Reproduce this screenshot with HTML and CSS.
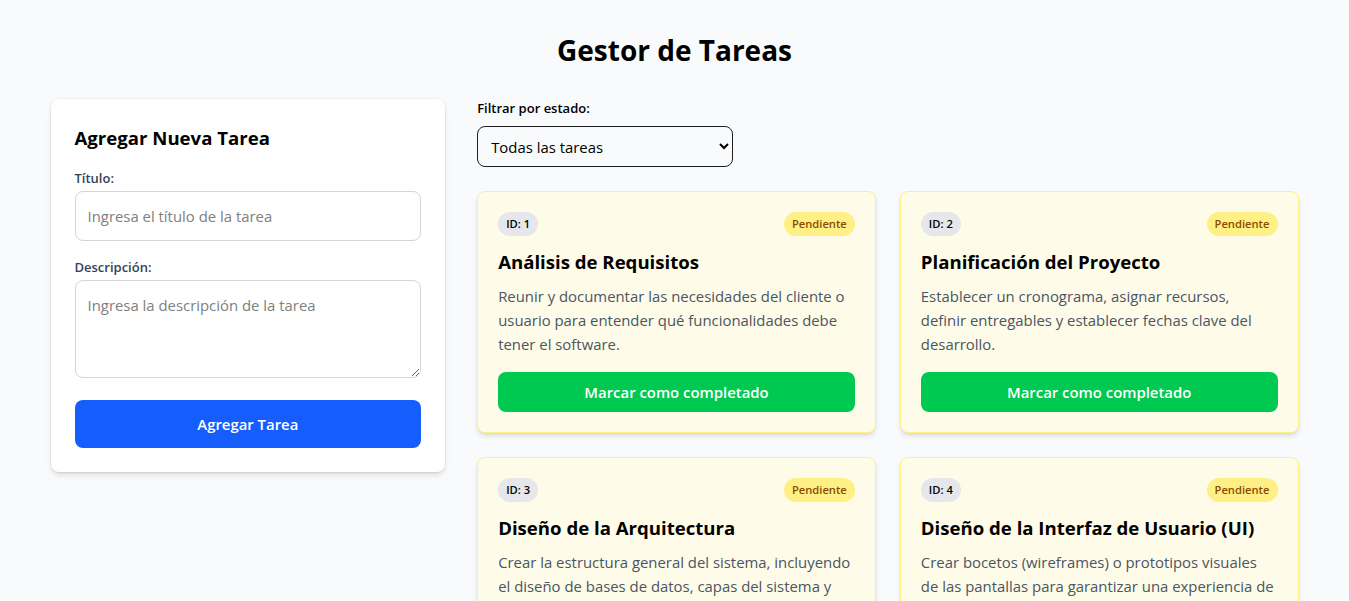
FILE: index.html
```html
<!DOCTYPE html>
<html lang="es">
<head>
<meta charset="utf-8">
<title>Gestor de Tareas</title>
<link rel="stylesheet" href="styles.css">
</head>
<body>
<div class="container">
  <h1 class="page-title">Gestor de Tareas</h1>
  <div class="layout">
    <aside class="form-card">
      <h2 class="form-title">Agregar Nueva Tarea</h2>
      <label class="field-label" for="titulo">Título:</label>
      <input class="field-input" id="titulo" type="text" placeholder="Ingresa el título de la tarea">
      <label class="field-label" for="desc">Descripción:</label>
      <textarea class="field-input field-area" id="desc" rows="3" placeholder="Ingresa la descripción de la tarea"></textarea>
      <button class="btn btn-blue" type="button">Agregar Tarea</button>
    </aside>
    <section class="tasks">
      <label class="filter-label" for="filtro">Filtrar por estado:</label>
      <select class="filter-select" id="filtro">
        <option>Todas las tareas</option>
        <option>Pendientes</option>
        <option>Completadas</option>
      </select>
      <div class="task-grid">
        <article class="task-card">
          <div class="task-top"><span class="badge badge-id">ID: 1</span><span class="badge badge-pend">Pendiente</span></div>
          <h3 class="task-title">Análisis de Requisitos</h3>
          <p class="task-desc">Reunir y documentar las necesidades del cliente o usuario para entender qué funcionalidades debe tener el software.</p>
          <button class="btn btn-green" type="button">Marcar como completado</button>
        </article>
        <article class="task-card">
          <div class="task-top"><span class="badge badge-id">ID: 2</span><span class="badge badge-pend">Pendiente</span></div>
          <h3 class="task-title">Planificación del Proyecto</h3>
          <p class="task-desc">Establecer un cronograma, asignar recursos, definir entregables y establecer fechas clave del desarrollo.</p>
          <button class="btn btn-green" type="button">Marcar como completado</button>
        </article>
        <article class="task-card">
          <div class="task-top"><span class="badge badge-id">ID: 3</span><span class="badge badge-pend">Pendiente</span></div>
          <h3 class="task-title">Diseño de la Arquitectura</h3>
          <p class="task-desc">Crear la estructura general del sistema, incluyendo el diseño de bases de datos, capas del sistema y tecnologías a utilizar.</p>
          <button class="btn btn-green" type="button">Marcar como completado</button>
        </article>
        <article class="task-card">
          <div class="task-top"><span class="badge badge-id">ID: 4</span><span class="badge badge-pend">Pendiente</span></div>
          <h3 class="task-title">Diseño de la Interfaz de Usuario (UI)</h3>
          <p class="task-desc">Crear bocetos (wireframes) o prototipos visuales de las pantallas para garantizar una experiencia de usuario intuitiva.</p>
          <button class="btn btn-green" type="button">Marcar como completado</button>
        </article>
      </div>
    </section>
  </div>
</div>
</body>
</html>
```
FILE: styles.css
```css
* { box-sizing: border-box; }
html, body { margin: 0; padding: 0; }
body {
  background: #f9fafb;
  font-family: "Open Sans", "Noto Sans", sans-serif;
  color: #000;
  font-size: 14.9px;
  line-height: 24px;
}
.container {
  max-width: 1280px;
  margin: 0 auto;
  padding: 32px 16px;
}
.page-title {
  margin: 0 0 31px;
  text-align: center;
  font-size: 28px;
  line-height: 36px;
  font-weight: 700;
}
.layout {
  display: grid;
  grid-template-columns: repeat(3, minmax(0, 1fr));
  gap: 32px;
  align-items: start;
}
.form-card {
  background: #fff;
  border-radius: 8px;
  padding: 25px 24px 24px;
  box-shadow: 0 0 0 1px rgba(0,0,0,0.04), 0 4px 6px -1px rgba(0,0,0,0.1), 0 2px 4px -2px rgba(0,0,0,0.1);
}
.form-title {
  margin: 0 0 16px;
  font-size: 18.6px;
  line-height: 28px;
  font-weight: 700;
}
.field-label {
  display: block;
  font-size: 13px;
  line-height: 20px;
  font-weight: 600;
  color: #364153;
  margin-bottom: 3px;
}
.field-input {
  display: block;
  width: 100%;
  font: inherit;
  font-size: 14.9px;
  line-height: 24px;
  padding: 12px 12px;
  border: 1px solid #d1d5dc;
  border-radius: 8px;
  background: #fff;
  color: #000;
  margin-bottom: 16px;
}
.field-input::placeholder { color: #808080; }
.field-area { resize: vertical; margin-bottom: 22px; height: 98px; }
.btn {
  display: block;
  width: 100%;
  border: 0;
  border-radius: 8px;
  color: #fff;
  font: inherit;
  font-weight: 600;
  font-size: 14.9px;
  line-height: 24px;
  cursor: pointer;
}
.btn-blue { background: #155dfc; padding: 12px 16px; }
.btn-green { background: #00c951; padding: 8px 16px; margin-top: 16px; }
.tasks { grid-column: span 2; }
.filter-label {
  display: block;
  font-size: 13px;
  line-height: 16px;
  font-weight: 600;
  margin: 1px 0 10px;
}
.filter-select {
  display: block;
  width: 256px;
  height: 41px;
  font: inherit;
  font-size: 14.9px;
  padding: 8px 9px;
  border: 1px solid #1f1f1f;
  border-radius: 8px;
  background: #f9fafb;
  color: #000;
  margin-bottom: 24px;
}
.task-grid {
  display: grid;
  grid-template-columns: repeat(2, minmax(0, 1fr));
  gap: 24px;
}
.task-card {
  background: #fefce8;
  border: 1px solid #fff085;
  border-radius: 8px;
  padding: 20px;
  box-shadow: 0 4px 6px -1px rgba(0,0,0,0.1), 0 2px 4px -2px rgba(0,0,0,0.1);
}
.task-top {
  display: flex;
  justify-content: space-between;
  align-items: center;
  margin-bottom: 12px;
}
.badge {
  display: inline-block;
  font-size: 11.2px;
  line-height: 16px;
  padding: 4px 8px;
  border-radius: 9999px;
}
.badge-id { background: #e5e7eb; font-weight: 600; color: #000; }
.badge-pend { background: #fff085; color: #894b00; font-weight: 600; }
.task-title {
  margin: 0 0 8px;
  font-size: 18.6px;
  line-height: 28px;
  font-weight: 700;
}
.task-desc {
  margin: 0;
  color: #4a5565;
  font-size: 14.9px;
  line-height: 24px;
}
```
